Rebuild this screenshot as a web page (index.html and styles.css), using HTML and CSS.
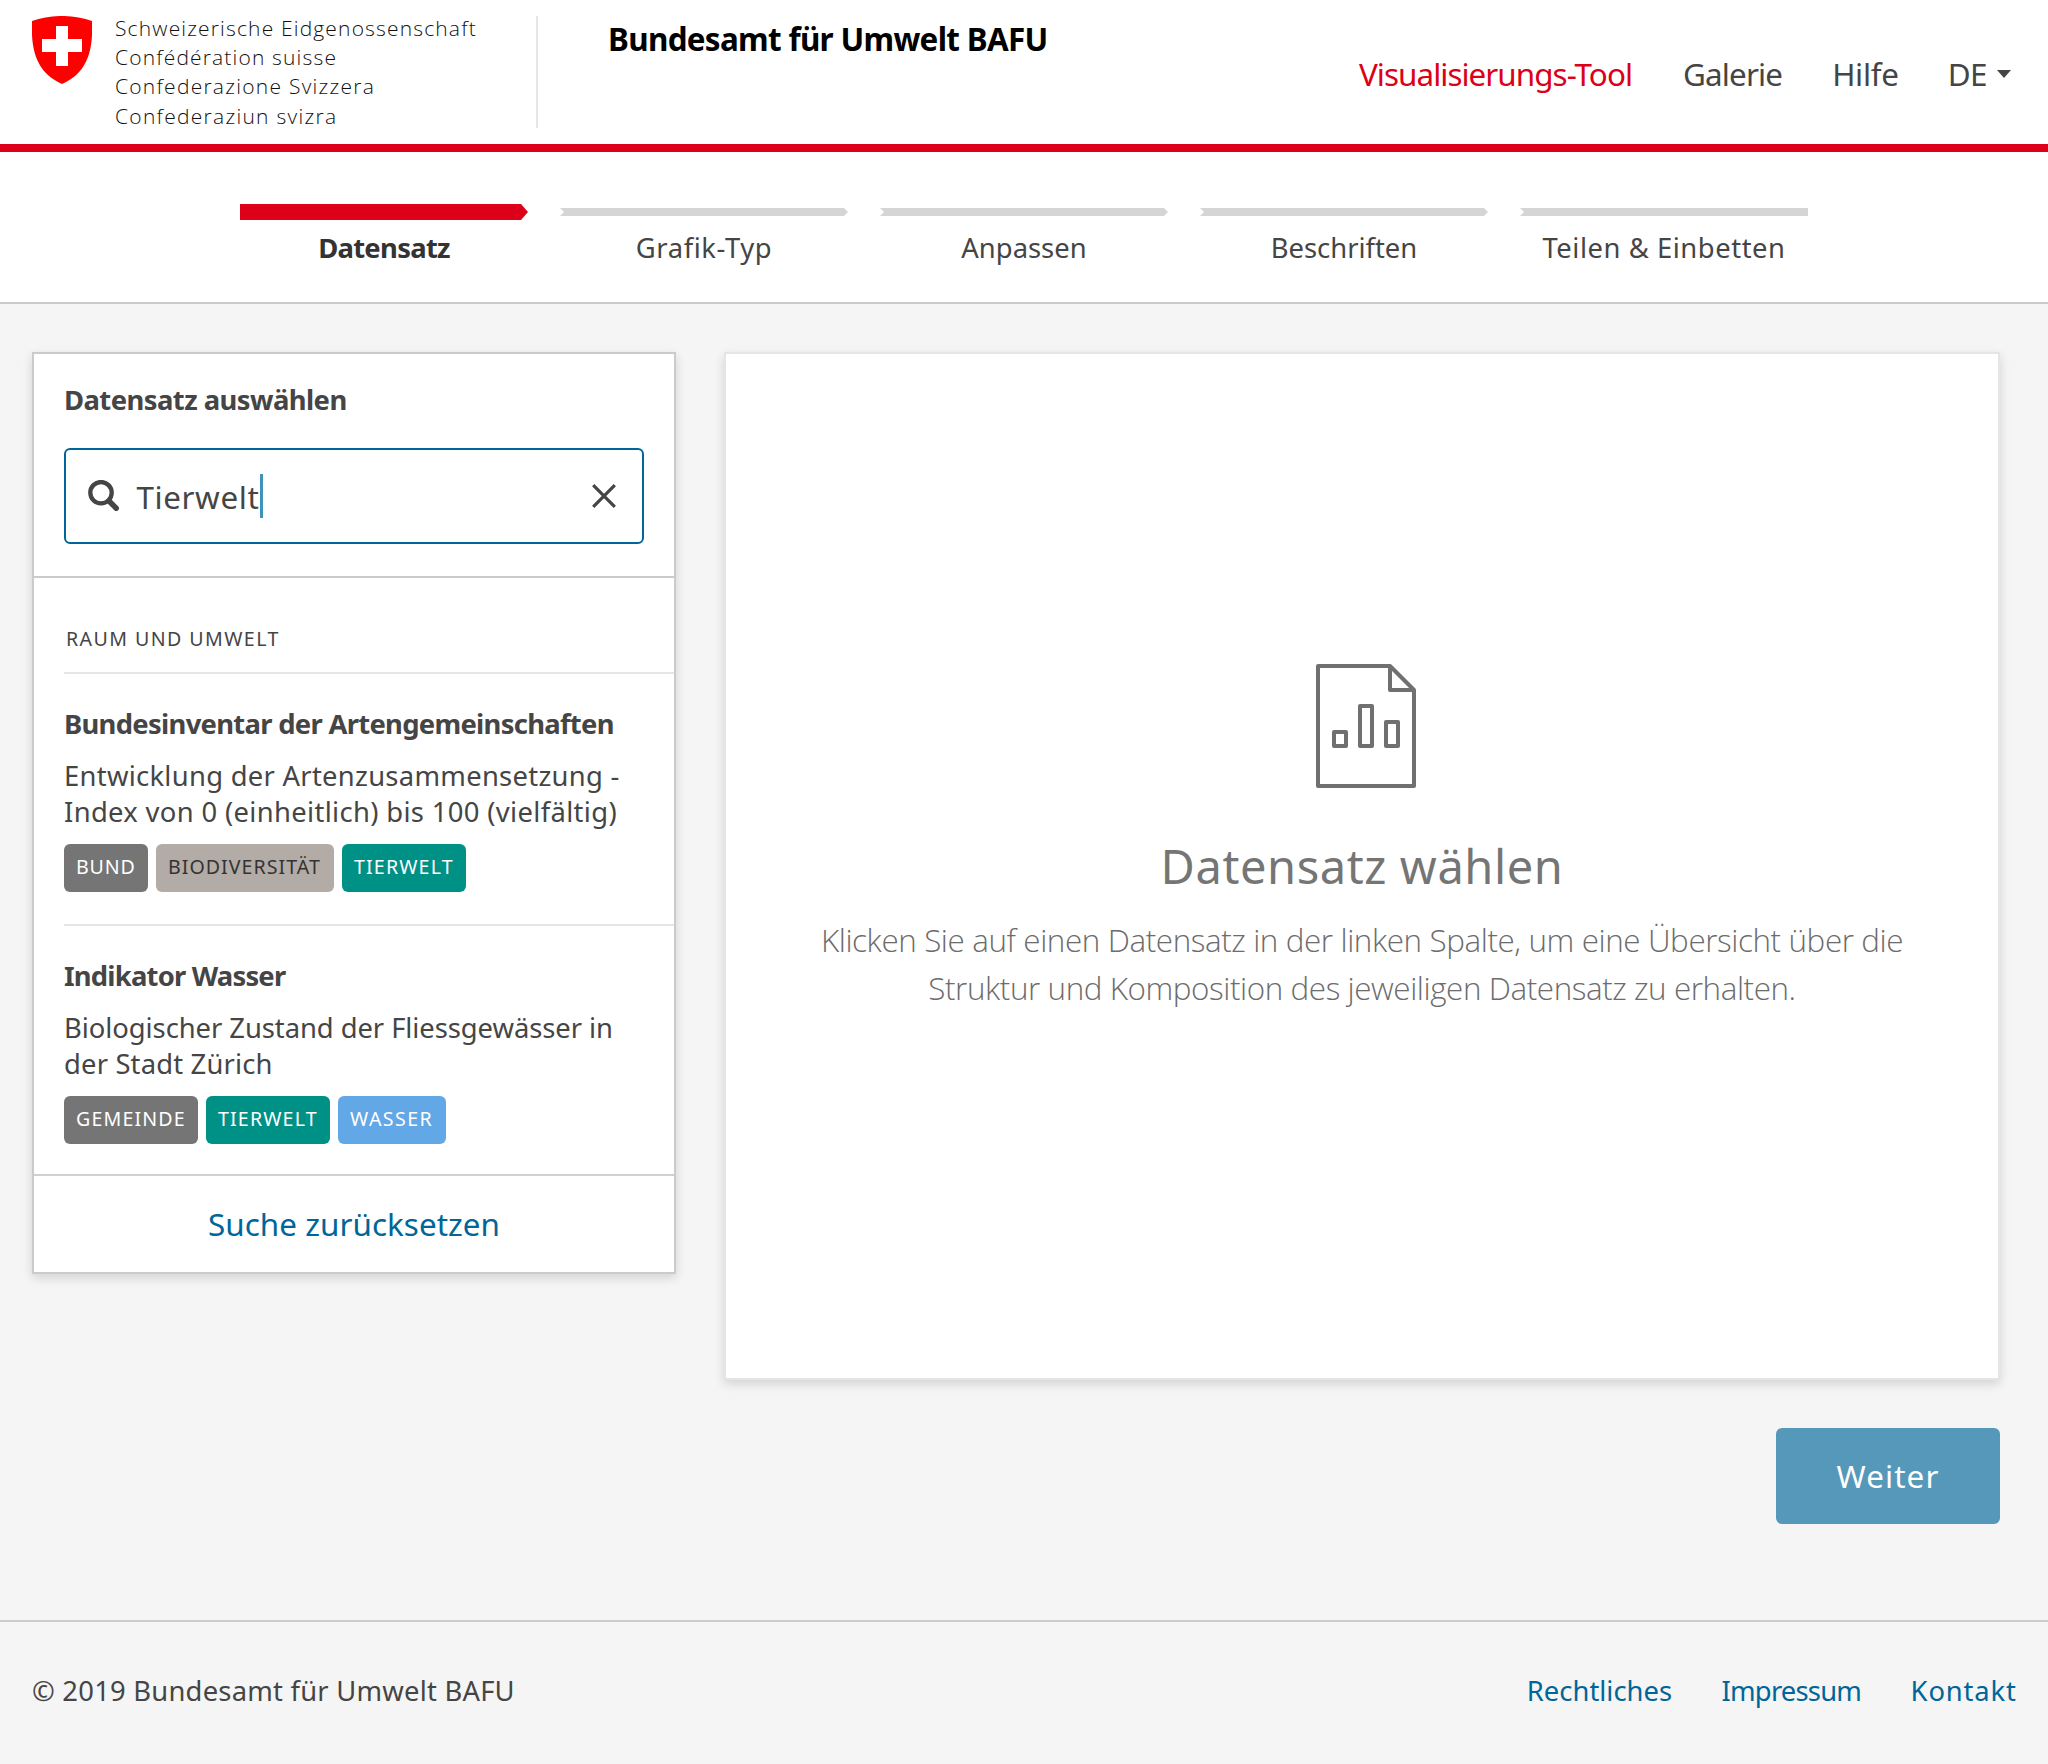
FILE: index.html
```html
<!DOCTYPE html>
<html lang="de">
<head>
<meta charset="utf-8">
<title>Visualisierungs-Tool – Bundesamt für Umwelt BAFU</title>
<link rel="stylesheet" href="styles.css">
</head>
<body>
<header class="header">
  <div class="logo">
    <svg class="shield" viewBox="0 0 60 68" width="60" height="68" aria-hidden="true">
      <path fill="#f00" d="M0 5C18-1.700 42-1.700 60 5C61 30 58 56 30 68C2 56-1 30 0 5Z"/>
      <path fill="#fff" d="M24 10h12v13h14v13H36v14H24V36H10V23h14z"/>
    </svg>
    <div class="confederation">
      <span class="cf1">Schweizerische Eidgenossenschaft</span>
      <span class="cf2">Confédération suisse</span>
      <span class="cf3">Confederazione Svizzera</span>
      <span class="cf4">Confederaziun svizra</span>
    </div>
  </div>
  <div class="office">Bundesamt für Umwelt BAFU</div>
  <nav class="nav">
    <a class="nav-tool">Visualisierungs-Tool</a>
    <a class="nav-gallery">Galerie</a>
    <a class="nav-help">Hilfe</a>
    <a class="nav-lang">DE<svg class="caret" viewBox="0 0 14 8" width="14" height="8"><path fill="#454545" d="M0 0h14L7 8z"/></svg></a>
  </nav>
</header>

<ol class="steps">
  <li class="step step-active"><span class="bar"></span><span class="s1">Datensatz</span></li>
  <li class="step"><span class="bar"></span><span class="s2">Grafik-Typ</span></li>
  <li class="step"><span class="bar"></span><span class="s3">Anpassen</span></li>
  <li class="step"><span class="bar"></span><span class="s4">Beschriften</span></li>
  <li class="step"><span class="bar bar-last"></span><span class="s5">Teilen &amp; Einbetten</span></li>
</ol>

<main class="main">
  <section class="panel datasets">
    <div class="search">
      <h2 class="search-title"><span>Datensatz auswählen</span></h2>
      <div class="input">
        <svg class="icon-search" viewBox="0 0 32 32" width="32" height="32"><circle cx="13" cy="12.700" r="10.700" fill="none" stroke="#454545" stroke-width="4.300"/><path d="M21 21l7.200 7.200" stroke="#454545" stroke-width="5.500" stroke-linecap="round"/></svg>
        <span class="query">Tierwelt</span><span class="cursor"></span>
        <svg class="icon-clear" viewBox="0 0 24 24" width="24" height="24"><path d="M1.200 1.200l21.600 21.600M22.800 1.200L1.200 22.800" stroke="#454545" stroke-width="3.200"/></svg>
      </div>
    </div>
    <div class="results">
      <h3 class="group">RAUM UND UMWELT</h3>
      <article class="item">
        <h4 class="item-title t1">Bundesinventar der Artengemeinschaften</h4>
        <p class="desc"><span class="d1">Entwicklung der Artenzusammensetzung -</span><br><span class="d2">Index von 0 (einheitlich) bis 100 (vielfältig)</span></p>
        <div class="tags"><span class="tag tag-grey w84">BUND</span><span class="tag tag-sand w178">BIODIVERSITÄT</span><span class="tag tag-teal w124">TIERWELT</span></div>
      </article>
      <article class="item">
        <h4 class="item-title t2">Indikator Wasser</h4>
        <p class="desc"><span class="d3">Biologischer Zustand der Fliessgewässer in</span><br><span class="d4">der Stadt Zürich</span></p>
        <div class="tags"><span class="tag tag-grey w134">GEMEINDE</span><span class="tag tag-teal w124">TIERWELT</span><span class="tag tag-blue w108">WASSER</span></div>
      </article>
    </div>
    <a class="reset"><span>Suche zurücksetzen</span></a>
  </section>

  <div class="content">
    <section class="panel preview">
      <svg class="icon-file" viewBox="0 0 100 124" width="100" height="124" fill="none" stroke="#707070" stroke-width="4" stroke-linejoin="round">
        <path d="M2 2h72l24 24v96H2zM74 2v24h24"/>
        <path d="M18 68h12v14H18zM44 42h12v40H44zM70 58h12v24H70z"/>
      </svg>
      <h1 class="hint-title"><span>Datensatz wählen</span></h1>
      <p class="hint"><span class="h1">Klicken Sie auf einen Datensatz in der linken Spalte, um eine Übersicht über die</span><br><span class="h2">Struktur und Komposition des jeweiligen Datensatz zu erhalten.</span></p>
    </section>
    <button class="next" type="button"><span>Weiter</span></button>
  </div>
</main>

<footer class="footer">
  <span class="copyright">© 2019 Bundesamt für Umwelt BAFU</span>
  <nav class="links"><a class="l1">Rechtliches</a><a class="l2">Impressum</a><a class="l3">Kontakt</a></nav>
</footer>
</body>
</html>
```

FILE: styles.css
```css
* { box-sizing: border-box; }
body {
  margin: 0;
  min-height: 1764px;
  background: #f5f5f5;
  color: #454545;
  font-family: "Noto Sans", "Open Sans", sans-serif;
  font-size: 27.4px;
  line-height: 36px;
}
h1, h2, h3, h4, p, ol { margin: 0; padding: 0; }
span, a { white-space: nowrap; }

.header {
  display: flex;
  height: 152px;
  background: #fff;
  border-bottom: 8px solid #dc0018;
}
.logo {
  display: flex;
  width: 538px;
  height: 112px;
  margin-top: 16px;
  padding-left: 32px;
  border-right: 2px solid #e5e5e5;
}
.confederation {
  display: flex;
  flex-direction: column;
  margin: -2.5px 0 0 23px;
  color: #111;
  font-family: "Open Sans", "Noto Sans", sans-serif;
  font-weight: 300;
  font-size: 21px;
  line-height: 29.4px;
  letter-spacing: 1.16px;
}
.cf3 { letter-spacing: 1.26px; }
.cf4 { letter-spacing: 1.28px; }
.office {
  margin: 21px 0 0 70px;
  color: #000;
  font-size: 31.4px;
  font-weight: 700;
  letter-spacing: -.68px;
}
.nav {
  display: flex;
  align-items: flex-start;
  gap: 50px;
  margin-left: auto;
  padding: 54px 37px 0 0;
  font-size: 31.4px;
  line-height: 40px;
}
.nav-tool { margin-right: 1px; color: #dc0018; letter-spacing: -.96px; }
.nav-gallery { letter-spacing: -.85px; }
.nav-help { margin-right: -1px; letter-spacing: -.3px; }
.nav-lang { display: flex; align-items: center; letter-spacing: -.5px; }
.caret { margin-left: 10px; }

.steps {
  display: flex;
  justify-content: center;
  gap: 32px;
  height: 152px;
  padding-top: 52px;
  background: #fff;
  border-bottom: 2px solid #cbcbcb;
  list-style: none;
}
.step {
  display: flex;
  flex-direction: column;
  align-items: center;
  width: 288px;
}
.bar {
  width: 288px;
  height: 8px;
  margin: 4px 0 14px;
  background: #d5d5d5;
  clip-path: polygon(0 0, 284px 0, 100% 50%, 284px 100%, 0 100%, 4px 50%);
}
.bar-last { clip-path: polygon(0 0, 100% 0, 100% 100%, 0 100%, 4px 50%); }
.step-active { color: #333; font-weight: 700; }
.step-active .bar {
  height: 16px;
  margin: 0 0 10px;
  background: #dc0018;
  clip-path: polygon(0 0, 281px 0, 100% 50%, 281px 100%, 0 100%);
}
.s1 { letter-spacing: -.7px; }
.s2 { letter-spacing: .6px; }
.s5 { letter-spacing: .55px; }

.main {
  display: flex;
  align-items: flex-start;
  gap: 48px;
  height: 1316px;
  padding: 48px 48px 0 32px;
}
.panel {
  background: #fff;
  border: 2px solid #cbcbcb;
  box-shadow: 0 4px 10px rgba(0, 0, 0, .14);
}
.datasets { width: 644px; height: 922px; }
.search {
  height: 224px;
  padding: 28px 30px 0;
  border-bottom: 2px solid #cbcbcb;
}
.search-title { font-size: 27.4px; font-weight: 700; letter-spacing: -.55px; }
.input {
  display: flex;
  align-items: center;
  height: 96px;
  margin-top: 30px;
  padding: 0 26px 0 22px;
  border: 2px solid #069;
  border-radius: 6px;
  font-size: 31.4px;
}
.query { margin-left: 16.5px; padding-top: 1px; letter-spacing: .6px; }
.cursor { width: 3px; height: 44px; margin-left: 1px; background: #3f93ba; }
.icon-clear { margin-left: auto; }

.results {
  height: 598px;
  padding-left: 30px;
  border-bottom: 2px solid #d0d0d0;
}
.group {
  height: 96px;
  padding: 43px 0 0 2px;
  border-bottom: 2px solid #e5e5e5;
  font-size: 19.6px;
  font-weight: 400;
  letter-spacing: 1.42px;
}
.item { height: 252px; padding-top: 32px; border-bottom: 2px solid #e5e5e5; }
.item:last-child { border-bottom: 0; }
.item-title { font-size: 27.4px; font-weight: 700; letter-spacing: -.7px; }
.t2 { letter-spacing: -.8px; }
.desc { margin-top: 16px; }
.d1 { letter-spacing: .28px; }
.d2 { letter-spacing: .34px; }
.d3 { letter-spacing: -.06px; }
.d4 { letter-spacing: .17px; }
.tags { display: flex; gap: 8px; margin-top: 14px; }
.tag {
  height: 48px;
  padding: 5px 0 0 12px;
  border-radius: 6px;
  color: #fff;
  font-size: 19.6px;
  line-height: 36px;
  letter-spacing: 1.15px;
}
.tag-grey { background: #757575; }
.tag-sand { background: #b3aba5; color: #333; }
.tag-teal { background: #009186; }
.tag-blue { background: #62a7e6; }
.w84 { width: 84px; letter-spacing: .85px; }
.w108 { width: 108px; letter-spacing: 1.45px; }
.w124 { width: 124px; }
.w134 { width: 134px; }
.w178 { width: 178px; letter-spacing: 1.03px; }
.reset {
  display: flex;
  justify-content: center;
  padding-top: 30px;
  color: #069;
  font-size: 31.4px;
  letter-spacing: .05px;
}

.content { display: flex; flex: 1; flex-direction: column; }
.preview {
  display: flex;
  flex-direction: column;
  align-items: center;
  height: 1028px;
  padding-top: 310px;
  border-color: #e5e5e5;
  color: #757575;
  text-align: center;
}
.icon-file { margin-left: 8px; }
.hint-title {
  margin-top: 48px;
  font-size: 47px;
  font-weight: 400;
  line-height: 60px;
  letter-spacing: .6px;
}
.hint {
  margin-top: 20px;
  color: #6c6c6c;
  font-family: "Open Sans", "Noto Sans", sans-serif;
  font-weight: 300;
  font-size: 31.4px;
  line-height: 48px;
  letter-spacing: -.4px;
}
.h2 { letter-spacing: -.42px; }
.next {
  align-self: flex-end;
  width: 224px;
  height: 96px;
  margin-top: 48px;
  border: 0;
  border-radius: 6px;
  background: #5698ba;
  color: #fff;
  font: inherit;
  font-size: 31.4px;
  letter-spacing: 1.1px;
}

.footer {
  display: flex;
  justify-content: space-between;
  height: 144px;
  padding: 51px 32px 0;
  border-top: 2px solid #cbcbcb;
}
.copyright { letter-spacing: .22px; }
.links { display: flex; gap: 49.5px; color: #069; }
.l2 { letter-spacing: -.8px; }
.l3 { margin-right: -.8px; letter-spacing: .85px; }
```
